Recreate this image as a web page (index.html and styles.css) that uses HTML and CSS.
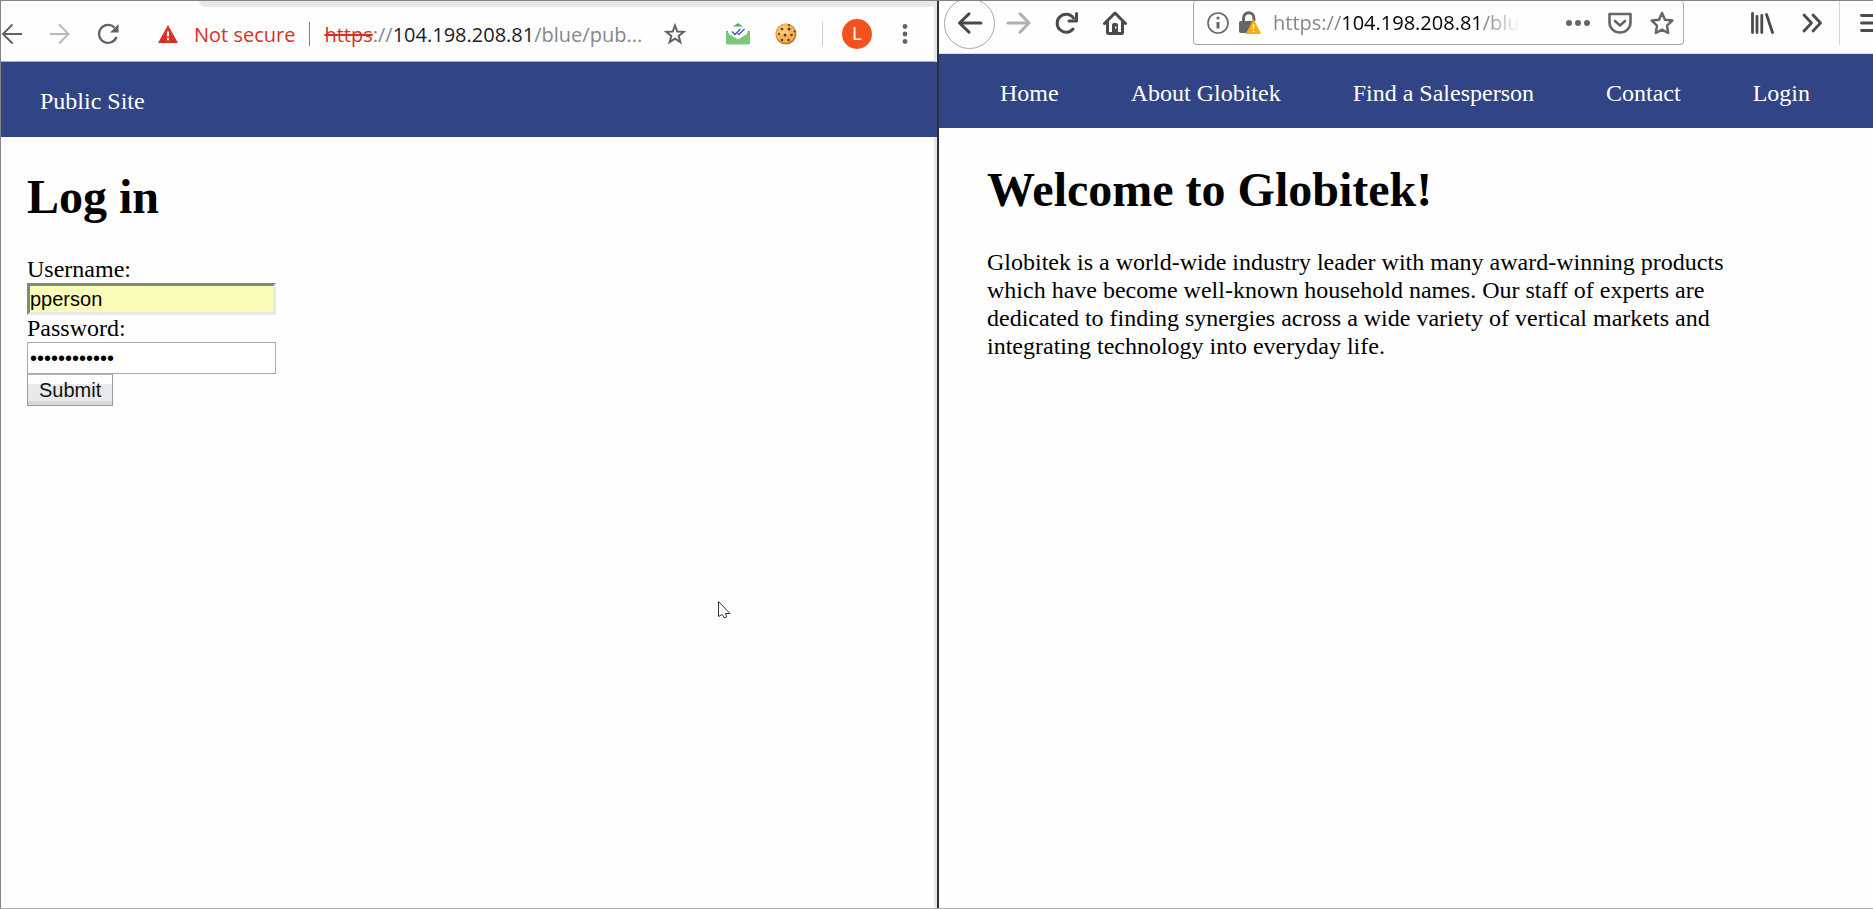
FILE: index.html
```html
<!DOCTYPE html>
<html lang="en">
<head>
<meta charset="utf-8">
<title>Globitek</title>
<link rel="stylesheet" href="styles.css">
</head>
<body>
<div class="desktop">
  <section class="window window-login">
    <div class="tabstrip"></div>
    <div class="toolbar toolbar-chrome">
      <div class="tools tools-nav">
        <button class="tool" aria-label="Back"><svg width="22" height="22" viewBox="0 0 22 22" fill="none" stroke="#5f6368" stroke-width="2"><path d="M21 11H2M11.500 1.500L2 11l9.500 9.500"/></svg></button>
        <button class="tool" aria-label="Forward"><svg width="22" height="22" viewBox="0 0 22 22" fill="none" stroke="#b4b7bf" stroke-width="2"><path d="M1 11h18M10 1.500L19.500 11 10 20.500"/></svg></button>
        <button class="tool" aria-label="Reload"><svg width="22" height="22" viewBox="0 0 22 22"><path d="M19.500 14A9 9 0 1 1 17.500 4.500" fill="none" stroke="#5f6368" stroke-width="2.300"/><path d="M21.500 1v8.500H13z" fill="#5f6368"/></svg></button>
      </div>
      <div class="address">
        <svg width="20" height="18" viewBox="0 0 20 18"><path d="M10 0l10 18H0z" fill="#d93025"/><path d="M9 6.500h2v5H9zM9 13h2v2.200H9z" fill="#fff"/></svg>
        <span class="insecure">Not secure</span>
        <span class="rule rule-dark"></span>
        <span class="url"><s>https</s>://<b>104.198.208.81</b>/blue/pub...</span>
      </div>
      <div class="tools tools-ext">
        <button class="tool" aria-label="Bookmark"><svg width="22" height="22" viewBox="0 0 22 22"><path d="M11 2.500l2.300 6 6.500.3-5.100 4.100 1.700 6.300-5.400-3.600-5.400 3.600 1.700-6.300L2.200 8.800l6.500-.3z" fill="none" stroke="#5f6368" stroke-width="2"/></svg></button>
        <button class="tool" aria-label="Mail tracker"><svg width="24" height="22" viewBox="0 0 24 22"><path d="M7 3.500L12 0l5 3.500z" fill="#57ab67"/><path d="M0 8h3v7H0zM21 8h3v7h-3z" fill="#57ab67"/><path d="M2 4h20v11H2z" fill="#fff"/><path d="M0 8l12 8.500L24 8v12q0 1.500-1.500 1.500h-21Q0 21.500 0 20z" fill="#7dc67a"/><path d="M3 4h18v7l-9 5-9-5z" fill="#fff"/><path d="M6 8.500l3 3 5.500-5.500M11.500 10.500l1.500 1 5.500-5.500" fill="none" stroke="#3f51c4" stroke-width="1.300"/></svg></button>
        <button class="tool" aria-label="Cookies"><svg width="22" height="22" viewBox="0 0 22 22"><circle cx="11" cy="11" r="10.500" fill="#c67a2c"/><circle cx="10.500" cy="10.200" r="9.500" fill="#f3b35c"/><circle cx="9" cy="8" r="5" fill="#fac878"/><g fill="#6b3718"><circle cx="7" cy="6" r="1.300"/><circle cx="14" cy="6" r="1.500"/><circle cx="10" cy="12" r="1.500"/><circle cx="4" cy="11" r="1.100"/><circle cx="16.500" cy="12" r="1.300"/><circle cx="7" cy="17" r="1.200"/><circle cx="13.500" cy="17" r="1.300"/><circle cx="14" cy="2" r="1"/><circle cx="19.500" cy="8.500" r="1"/></g></svg></button>
        <span class="rule"></span>
        <button class="avatar">L</button>
        <button class="tool" aria-label="Menu"><svg width="6" height="22" viewBox="0 0 6 22" fill="#5f6368"><circle cx="3" cy="3.500" r="2.400"/><circle cx="3" cy="11" r="2.400"/><circle cx="3" cy="18.500" r="2.400"/></svg></button>
      </div>
    </div>
    <nav class="sitenav sitenav-login"><a href="#">Public Site</a></nav>
    <main class="content content-login">
      <h1>Log in</h1>
      <form>
        <label for="username">Username:</label>
        <input class="field field-filled" id="username" type="text" value="pperson">
        <label for="password">Password:</label>
        <input class="field" id="password" type="password" value="abcdefghijkl">
        <button class="submit" type="button">Submit</button>
      </form>
    </main>
    <svg class="pointer" width="13" height="18" viewBox="0 0 13 18"><path d="M.5.500v15l3.700-2 2.300 3.500 2-1-1-3.500h4.500z" fill="#fff" stroke="#33333c"/></svg>
  </section>

  <section class="window window-home">
    <div class="toolbar toolbar-firefox">
      <button class="tool back" aria-label="Back"><svg width="26" height="22" viewBox="0 0 26 22" fill="none" stroke="#4a4a4a" stroke-width="3" stroke-linecap="round" stroke-linejoin="round"><path d="M24 11H2.500M12 1.800L2.500 11l9.500 9.200"/></svg></button>
      <div class="tools tools-ff">
        <button class="tool" aria-label="Forward"><svg width="25" height="22" viewBox="0 0 25 22" fill="none" stroke="#b0b0b0" stroke-width="3" stroke-linecap="round" stroke-linejoin="round"><path d="M2 11h21M14 1.800l9 9.200-9 9.200"/></svg></button>
        <button class="tool" aria-label="Reload"><svg width="24" height="22" viewBox="0 0 24 22"><path d="M18 17A9 9 0 1 1 18.500 6" fill="none" stroke="#4a4a4a" stroke-width="3" stroke-linecap="round"/><path d="M21.500 1.500V9H14" fill="none" stroke="#4a4a4a" stroke-width="3" stroke-linecap="round" stroke-linejoin="round"/></svg></button>
        <button class="tool" aria-label="Home"><svg width="24" height="24" viewBox="0 0 24 24"><path d="M1.500 12.500L12 2l10.500 10.500M4.500 11v10.500q0 1 1 1h13q1 0 1-1V11" fill="none" stroke="#4a4a4a" stroke-width="3" stroke-linecap="round" stroke-linejoin="round"/><path d="M9 22v-8q0-2 2-2h2q2 0 2 2v8z" fill="#4a4a4a"/><path d="M12 15.500h1.500v2H12z" fill="#fff"/></svg></button>
      </div>
      <div class="urlbar">
        <svg width="22" height="22" viewBox="0 0 22 22"><circle cx="11" cy="11" r="10" fill="none" stroke="#666" stroke-width="1.600"/><circle cx="11" cy="6" r="1.600" fill="#666"/><path d="M11 10v6.500" stroke="#666" stroke-width="3"/></svg>
        <svg width="22" height="24" viewBox="0 0 22 24"><path d="M4.500 12V7a5.200 5.200 0 0 1 10.400 0v3" fill="none" stroke="#666" stroke-width="3"/><path d="M0 12q0-2 2-2h13v12H2q-2 0-2-2z" fill="#666"/><path d="M14.500 9l7 13.500h-14z" fill="#ffae00" stroke="#ffae00" stroke-linejoin="round"/><path d="M14.500 13.500v4.500M14.500 19.500v1.700" stroke="#fff" stroke-width="1.600"/></svg>
        <span class="url url-fade">https://<b>104.198.208.81</b>/blu</span>
        <div class="tools tools-page">
          <button class="tool" aria-label="Page actions"><svg width="24" height="6" viewBox="0 0 24 6" fill="#666"><circle cx="3" cy="3" r="3"/><circle cx="12" cy="3" r="3"/><circle cx="21" cy="3" r="3"/></svg></button>
          <button class="tool" aria-label="Save to Pocket"><svg width="24" height="22" viewBox="0 0 24 22" fill="none" stroke="#666" stroke-width="2.600" stroke-linecap="round" stroke-linejoin="round"><path d="M1.500 2h21v8.500a10.500 10 0 0 1-21 0z"/><path d="M7 9l5 4.500L17 9"/></svg></button>
          <button class="tool" aria-label="Bookmark"><svg width="24" height="24" viewBox="0 0 24 24"><path d="M12 2l3 6.800 7.300.8-5.300 5L18.200 22 12 18.700 5.800 22 7 14.600l-5.300-5L9 8.800z" fill="none" stroke="#666" stroke-width="2.500" stroke-linejoin="round"/></svg></button>
        </div>
      </div>
      <div class="tools tools-end">
        <button class="tool" aria-label="Library"><svg width="23" height="22" viewBox="0 0 23 22" fill="none" stroke="#4a4a4a" stroke-width="2.800" stroke-linecap="round"><path d="M1.500 1.500v19M6 4.500v16M10.800 3.500v17M15.500 2.500l6 18"/></svg></button>
        <button class="tool" aria-label="More tools"><svg width="21" height="20" viewBox="0 0 21 20" fill="none" stroke="#4a4a4a" stroke-width="2.800" stroke-linecap="round" stroke-linejoin="round"><path d="M2 2l7.500 8L2 18M11 2l7.500 8-7.500 8"/></svg></button>
      </div>
      <span class="rule rule-tall"></span>
      <button class="tool menu" aria-label="Menu"><svg width="13" height="20" viewBox="0 0 13 20" stroke="#4a4a4a" stroke-width="2.800" stroke-linecap="round"><path d="M1.500 2.500H15M1.500 10H15M1.500 17.500H15"/></svg></button>
    </div>
    <nav class="sitenav sitenav-home">
      <a href="#">Home</a><a href="#">About Globitek</a><a href="#">Find a Salesperson</a><a href="#">Contact</a><a href="#">Login</a>
    </nav>
    <main class="content content-home">
      <h1>Welcome to Globitek!</h1>
      <p>Globitek is a world-wide industry leader with many award-winning products which have become well-known household names. Our staff of experts are dedicated to finding synergies across a wide variety of vertical markets and integrating technology into everyday life.</p>
    </main>
  </section>
</div>
</body>
</html>
```

FILE: styles.css
```css
* { box-sizing: border-box; }
body {
  margin: 0;
  background: #fefefe;
  color: #000;
  font: 24px/28px "Liberation Serif", serif;
}
.desktop {
  display: grid;
  grid-template-columns: 938fr 934fr;
  min-height: 100vh;
  border: 1px solid #838383;
  border-right: 0;
  border-bottom-color: #aeaeae;
}
.window {
  position: relative;
  display: flex;
  flex-direction: column;
  min-width: 0;
  overflow: hidden;
}
.window-login { border-right: 2px solid #303032; }

.tabstrip {
  height: 6px;
  margin-left: 198px;
  background: #e8e8ea;
  border-bottom-left-radius: 8px;
}
.toolbar { display: flex; align-items: center; font: 20px/28px "Open Sans", sans-serif; }
.tools { display: flex; align-items: center; }
.tool {
  display: flex;
  flex: none;
  padding: 0;
  border: 0;
  background: none;
}
.rule { width: 1px; height: 24px; background: #c8cacd; }
.rule-dark { background: #808388; }
.url { color: #85888c; white-space: nowrap; }
.url b { color: #202124; font-weight: 400; }
.url s { color: #d93025; }

.toolbar-chrome {
  height: 55px;
  border-right: 3px solid #e4e6e9;
  border-bottom: 1px solid #a9acb0;
}
.tools-nav { gap: 26px; }
.address { display: flex; flex: 1; align-items: center; gap: 14px; margin-left: 39px; }
.address svg { margin-right: 2px; }
.insecure { color: #d93025; white-space: nowrap; }
.insecure, .toolbar-chrome .url { padding-top: 2px; }
.tools-ext { gap: 25px; padding-right: 26px; }
.tools-ext .tool:first-child { margin-right: 15px; }
.tools-ext .avatar { margin: 0 5px 0 -6px; }
.avatar {
  width: 30px;
  height: 30px;
  padding: 0;
  border: 0;
  border-radius: 50%;
  background: #f4511e;
  color: #fff;
  font: 18px/30px Roboto, sans-serif;
}

.toolbar-firefox {
  height: 53px;
  padding-bottom: 8px;
  border-bottom: 1px solid #dfdfe3;
}
.back {
  align-items: center;
  justify-content: center;
  width: 51px;
  height: 51px;
  margin-left: 5px;
  border: 1px solid #a8a8ac;
  border-radius: 50%;
}
.tools-ff { gap: 24px; margin-left: 11px; }
.urlbar {
  display: flex;
  flex: 1;
  align-items: center;
  gap: 10px;
  min-width: 0;
  height: 44px;
  margin-left: 66px;
  padding: 0 9px 0 13px;
  border: 1px solid #a8a8ac;
  border-top: 0;
  border-radius: 4px;
}
.url-fade {
  margin-left: 2px;
  -webkit-mask-image: linear-gradient(90deg, #000 86%, transparent);
  mask-image: linear-gradient(90deg, #000 86%, transparent);
}
.url-fade b { color: #000; }
.tools-page { gap: 18px; margin-left: auto; }
.tools-end { gap: 28px; margin: 0 16px 0 67px; }
.rule-tall { align-self: stretch; height: auto; background: #d4d4e0; }
.menu { margin-left: 20px; }

.sitenav { display: flex; align-items: center; background: #304486; }
.sitenav a { color: #fff; text-decoration: none; white-space: nowrap; }
.sitenav-login { height: 75px; padding: 2px 39px 0; }
.sitenav-home { height: 74px; padding: 4px 61px 0; gap: 72px; }

.content { flex: 1; }
.content h1 { margin: 0; font-size: 48px; line-height: 56px; }
.content-login { padding: 32px 26px; border-right: 3px solid #e4e6e9; }
.content-login form {
  display: flex;
  flex-direction: column;
  align-items: flex-start;
  margin-top: 31px;
}
.content-login label { line-height: 27px; }
.content-home { padding: 34px 48px; }
.content-home p { max-width: 768px; margin: 30px 0 0; }
.field {
  width: 249px;
  height: 32px;
  padding: 0 2px;
  border: 1px solid #a9a9a9;
  background: #fff;
  color: #000;
  font: 20px/24px "Liberation Sans", sans-serif;
}
.field-filled {
  padding: 0;
  border: 3px solid;
  border-color: #858585 #e8e8ea #e8e8ea #858585;
  background: #fcfcb9;
}
.submit {
  height: 32px;
  padding: 0 11px;
  border: 1px solid #9a9a9a;
  border-top-color: #b4b4b4;
  background: linear-gradient(#fefefe 30%, #e8e9eb 30%, #e8e9eb 88%, #d8d8d8 88%);
  color: #111;
  font: 20px/24px "Liberation Sans", sans-serif;
}
.pointer { position: absolute; left: 717px; top: 600px; }
```
